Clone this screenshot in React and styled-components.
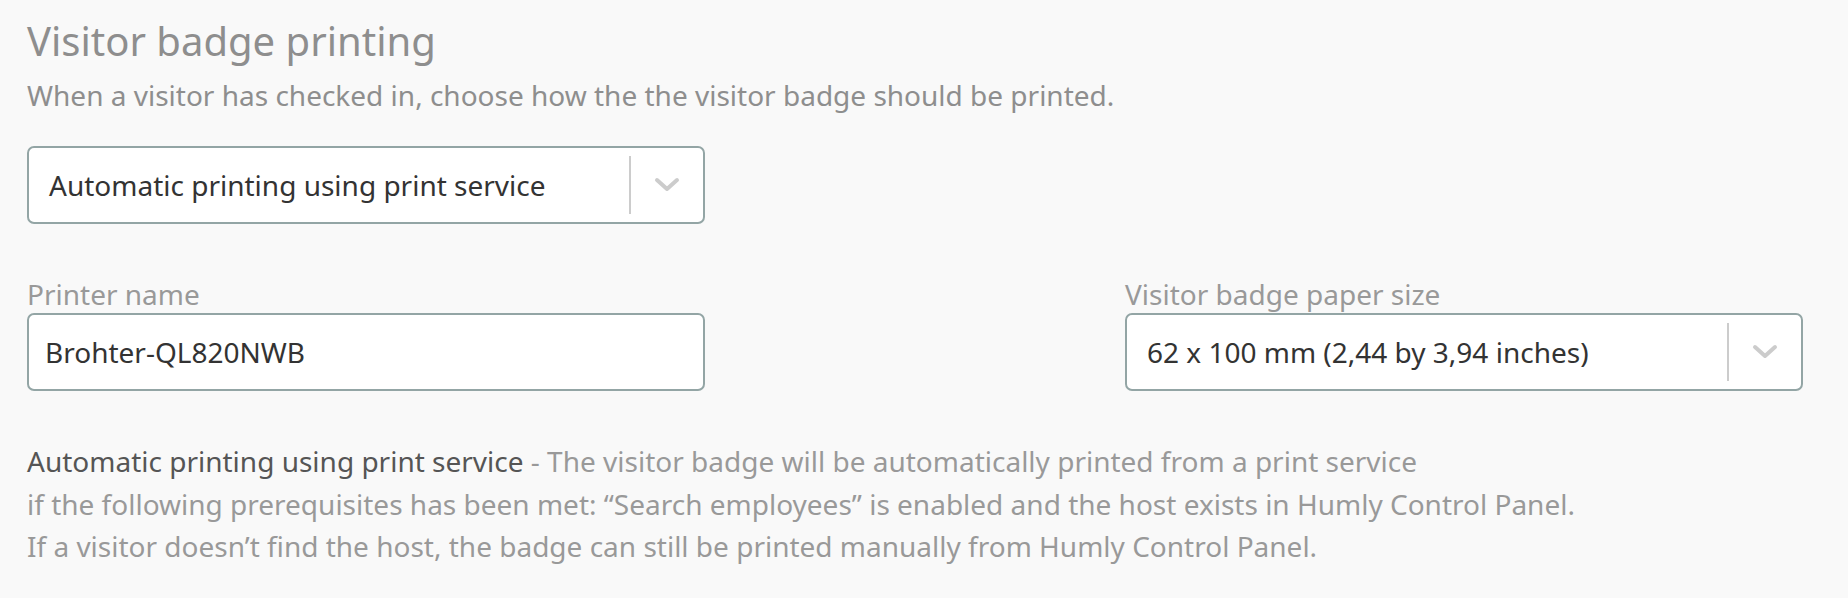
import React from "react";
import styled, { createGlobalStyle } from "styled-components";

const Global = createGlobalStyle`
  html, body { margin: 0; padding: 0; background: #f9f9f9; }
  body { font-family: "Noto Sans", "Open Sans", sans-serif; }
`;

const Page = styled.div`
  padding: 18px 0 0 27px;
  box-sizing: border-box;
  width: 1803px;
`;

const Title = styled.h1`
  margin: 0;
  font-size: 40px;
  line-height: 46px;
  font-weight: 400;
  color: #8e8e8e;
`;

const Subtitle = styled.p`
  margin: 13px 0 0;
  font-size: 28px;
  line-height: 36px;
  color: #8e8e8e;
`;

const Field = styled.div`
  display: flex;
  flex-direction: column;
  width: 678px;
`;

const Label = styled.label`
  font-size: 28px;
  line-height: 30px;
  color: #999;
  margin-bottom: 4px;
`;

const Box = styled.div`
  box-sizing: border-box;
  height: 78px;
  width: 678px;
  border: 2px solid #93a5a5;
  border-radius: 7px;
  background: #fff;
  display: flex;
  align-items: center;
  padding-left: ${(p) => p.$pad}px;
  font-size: 28px;
  line-height: 36px;
  color: #333;
`;

const Value = styled.span`
  flex: 1;
`;

const Indicator = styled.div`
  align-self: stretch;
  display: flex;
  align-items: center;
  padding: 8px 0;
  box-sizing: border-box;
`;

const Divider = styled.div`
  width: 2px;
  align-self: stretch;
  background: #cccccc;
`;

const ChevronWrap = styled.div`
  width: 72px;
  display: flex;
  justify-content: center;
  align-items: center;
`;

const TopSelect = styled.div`
  margin-top: 33px;
`;

const Row = styled.div`
  display: flex;
  justify-content: space-between;
  margin-top: 55px;
`;

const Description = styled.p`
  margin: 49px 0 0;
  font-size: 28px;
  line-height: 42.5px;
  color: #999;
`;

const Strong = styled.span`
  color: #555;
`;

const Chevron = () => (
  <svg width="26" height="16" viewBox="0 0 26 16">
    <polyline
      points="3,3 13,12 23,3"
      fill="none"
      stroke="#cccccc"
      strokeWidth="4"
      strokeLinecap="round"
      strokeLinejoin="round"
    />
  </svg>
);

const Select = ({ value }) => (
  <Box $pad={20}>
    <Value>{value}</Value>
    <Indicator>
      <Divider />
      <ChevronWrap>
        <Chevron />
      </ChevronWrap>
    </Indicator>
  </Box>
);

export default function App() {
  return (
    <>
      <Global />
      <Page>
        <Title>Visitor badge printing</Title>
        <Subtitle>
          When a visitor has checked in, choose how the the visitor badge should be printed.
        </Subtitle>
        <TopSelect>
          <Select value="Automatic printing using print service" />
        </TopSelect>
        <Row>
          <Field>
            <Label>Printer name</Label>
            <Box $pad={16}>
              <Value>Brohter-QL820NWB</Value>
            </Box>
          </Field>
          <Field>
            <Label>Visitor badge paper size</Label>
            <Select value="62 x 100 mm (2,44 by 3,94 inches)" />
          </Field>
        </Row>
        <Description>
          <Strong>Automatic printing using print service</Strong> - The visitor badge will be
          automatically printed from a print service
          <br />
          if the following prerequisites has been met: “Search employees” is enabled and the host
          exists in Humly Control Panel.
          <br />
          If a visitor doesn’t find the host, the badge can still be printed manually from Humly
          Control Panel.
        </Description>
      </Page>
    </>
  );
}
